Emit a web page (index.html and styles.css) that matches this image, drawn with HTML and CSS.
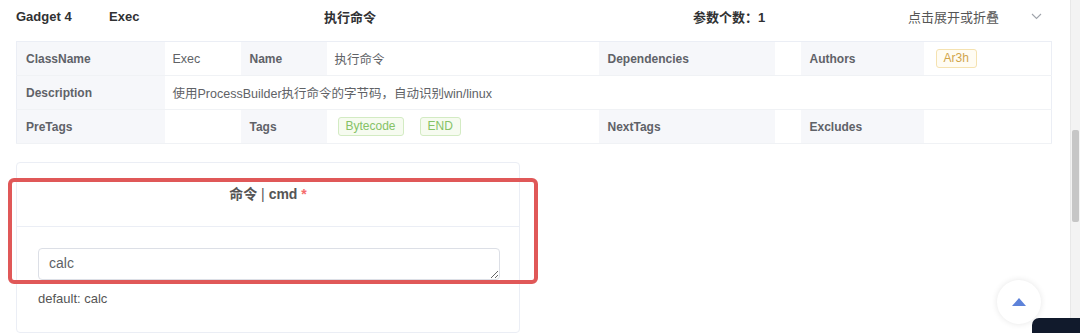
FILE: index.html
```html
<!DOCTYPE html>
<html lang="en">
<head>
    <meta charset="UTF-8">
    <meta name="viewport" content="width=device-width, initial-scale=1.0">
    <title>Gadget 4 - Exec</title>
    <link rel="stylesheet" href="styles.css">
</head>
<body>
    <div class="page">
        <div class="main">
            <!-- Collapse header -->
            <div class="gadget-header">
                <span class="gh-index">Gadget 4</span>
                <span class="gh-class">Exec</span>
                <span class="gh-name">执行命令</span>
                <span class="gh-count">参数个数：1</span>
                <span class="gh-toggle">点击展开或折叠</span>
                <svg class="gh-arrow" width="11" height="7" viewBox="0 0 11 7">
                    <polyline points="1,1 5.5,5.5 10,1" fill="none" stroke="#a0a4ab" stroke-width="1.1"/>
                </svg>
            </div>

            <!-- Descriptions table -->
            <table class="desc">
                <colgroup>
                    <col style="width:148px"><col style="width:76px"><col style="width:86px"><col style="width:272px">
                    <col style="width:176px"><col style="width:26px"><col style="width:123px"><col style="width:128px">
                </colgroup>
                <tr>
                    <td class="label">ClassName</td>
                    <td>Exec</td>
                    <td class="label">Name</td>
                    <td>执行命令</td>
                    <td class="label">Dependencies</td>
                    <td></td>
                    <td class="label">Authors</td>
                    <td><span class="tag tag-gold">Ar3h</span></td>
                </tr>
                <tr>
                    <td class="label">Description</td>
                    <td colspan="7">使用ProcessBuilder执行命令的字节码，自动识别win/linux</td>
                </tr>
                <tr>
                    <td class="label">PreTags</td>
                    <td></td>
                    <td class="label">Tags</td>
                    <td class="tags-cell"><span class="tag tag-green">Bytecode</span><span class="tag tag-green">END</span></td>
                    <td class="label">NextTags</td>
                    <td></td>
                    <td class="label">Excludes</td>
                    <td></td>
                </tr>
            </table>

            <!-- Param card -->
            <div class="param-card">
                <div class="param-header">
                    命令 <span class="sep">|</span> cmd <span class="required">*</span>
                </div>
                <div class="param-body">
                    <textarea class="param-input" rows="1">calc</textarea>
                    <div class="param-default">default: calc</div>
                </div>
                <div class="highlight"></div>
            </div>
        </div>

        <div class="scrollbar">
            <div class="scroll-thumb"></div>
        </div>

        <div class="back-top">
            <svg width="14" height="8" viewBox="0 0 14 8">
                <polygon points="7,0 14,8 0,8" fill="#5d82d9"/>
            </svg>
        </div>
        <div class="corner-widget"></div>
    </div>
</body>
</html>
```

FILE: styles.css
```css
* {
    margin: 0;
    padding: 0;
    box-sizing: border-box;
}

body {
    font-family: "Liberation Sans", "Noto Sans CJK SC", sans-serif;
    background: #fff;
    color: #606266;
    width: 1080px;
    height: 333px;
    overflow: hidden;
}

.page {
    position: relative;
    display: flex;
    height: 333px;
}

.main {
    flex: 1;
    padding: 0 18px 0 16px;
}

.gadget-header {
    display: grid;
    grid-template-columns: 93px 215px 369px 215px 123px 11px;
    align-items: center;
    height: 33px;
    font-size: 13px;
}

.gh-index,
.gh-class,
.gh-name,
.gh-count {
    font-weight: bold;
    color: #303133;
}

.gh-toggle {
    color: #555;
}

.desc {
    margin-top: 8px;
    width: 1035px;
    table-layout: fixed;
    border-collapse: collapse;
    border: 1px solid #ebeef5;
    font-size: 12.5px;
}

.desc td {
    height: 34px;
    padding: 0 8px;
    border-bottom: 1px solid #f0f2f5;
    color: #606266;
    white-space: nowrap;
}

.desc td.label {
    background: #f6f7fa;
    font-weight: bold;
    font-size: 12px;
    padding-left: 9px;
    color: #5f6268;
}

.desc td.tags-cell {
    padding-left: 11px;
}

.tag {
    display: inline-block;
    height: 19px;
    line-height: 17px;
    padding: 0 7px;
    font-size: 12px;
    border: 1px solid;
    border-radius: 3px;
    margin-right: 16px;
}

.tag-green {
    background: #f6fbf0;
    border-color: #d3ebc3;
    color: #85c266;
}

.tag-gold {
    background: #fffcf3;
    border-color: #f5e2b0;
    color: #d1a54a;
    margin-left: 4px;
}

.param-card {
    position: relative;
    width: 504px;
    margin-top: 18px;
    border: 1px solid #ebeef5;
    border-radius: 4px;
}

.param-header {
    height: 64px;
    line-height: 63px;
    text-align: center;
    font-size: 14px;
    font-weight: bold;
    color: #555;
    border-bottom: 1px solid #ebeef5;
}

.sep {
    font-weight: normal;
}

.required {
    color: #f56c6c;
}

.param-body {
    padding: 21px 19px 26px 21px;
}

.param-input {
    display: block;
    width: 100%;
    height: 32px;
    padding: 6px 10px;
    font-family: "Liberation Sans", "Noto Sans CJK SC", sans-serif;
    font-size: 14px;
    color: #606266;
    border: 1px solid #dcdfe6;
    border-radius: 4px;
    resize: vertical;
    outline: none;
}

.param-default {
    margin-top: 11px;
    font-size: 13px;
    color: #555;
}

/* red annotation box drawn over the card */
.highlight {
    position: absolute;
    left: -9px;
    top: 15px;
    width: 530px;
    height: 106px;
    border: 4px solid #e05858;
    border-radius: 6px;
}

.scrollbar {
    width: 11px;
    background: #f3f3f3;
    border-left: 1px solid #e8e8e8;
    padding: 130px 1px 0 1px;
}

.scroll-thumb {
    height: 92px;
    background: #c6c6c6;
    border-radius: 2px;
}

.back-top {
    position: absolute;
    left: 997px;
    top: 280px;
    width: 44px;
    height: 44px;
    border-radius: 50%;
    background: #fff;
    box-shadow: 0 0 6px rgba(0, 0, 0, 0.1);
    display: flex;
    align-items: center;
    justify-content: center;
}

.corner-widget {
    position: absolute;
    left: 1032px;
    top: 318px;
    width: 48px;
    height: 15px;
    background: #111a2c;
    border-radius: 7px 0 0 0;
}
```
